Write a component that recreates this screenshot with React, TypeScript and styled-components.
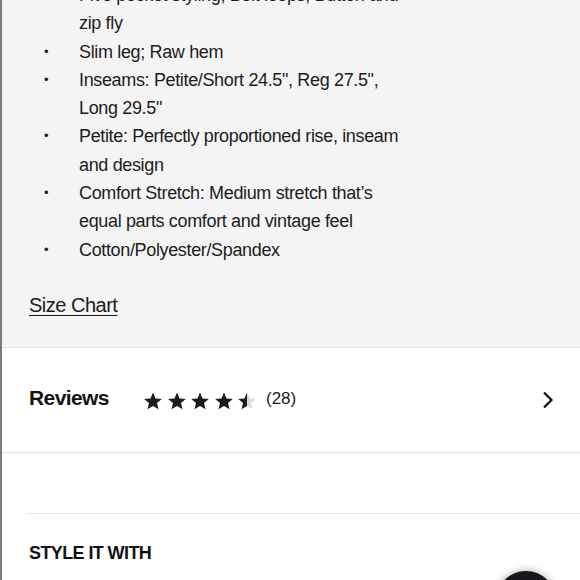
import * as React from 'react'
import styled, { createGlobalStyle } from 'styled-components'

const Global = createGlobalStyle`
  html, body {
    margin: 0;
    padding: 0;
    background: #fff;
  }
  body {
    font-family: 'Liberation Sans', Arial, sans-serif;
    color: #1a1a1a;
  }
`

const Page = styled.div`
  position: relative;
  width: 580px;
  height: 580px;
  overflow: hidden;
  box-sizing: border-box;
  border-left: 2px solid #7b7b7b;
  background: #fff;
`

const Details = styled.section`
  background: #f4f4f4;
  padding: 0 0 28px 27px;
  border-bottom: 1px solid #e3e3e3;
`

const List = styled.ul`
  margin: -19px 0 0;
  padding: 0;
  list-style: none;
  width: 378px;
`

const Item = styled.li`
  display: grid;
  grid-template-columns: 50px 1fr;
  font-size: 18px;
  line-height: 28.3px;
  letter-spacing: -0.35px;
  color: #1c1c1c;
`

const Dot = styled.span`
  padding-left: 15px;
  font-size: 13px;
`

const SizeChart = styled.a`
  display: inline-block;
  margin-top: 27px;
  font-size: 20px;
  line-height: 28px;
  letter-spacing: -0.5px;
  color: #1a1a1a;
  text-decoration: underline;
  text-underline-offset: 3px;
  text-decoration-thickness: 1px;
`

const ReviewsRow = styled.div`
  display: flex;
  align-items: center;
  height: 104px;
  padding: 0 26px 0 27px;
  border-bottom: 1px solid #e3e3e3;
`

const ReviewsTitle = styled.h2`
  margin: -4px 0 0;
  width: 114px;
  font-size: 21px;
  font-weight: 700;
  letter-spacing: -0.6px;
  color: #141414;
`

const Stars = styled.div`
  display: flex;
  gap: 3.5px;
  margin-top: 2px;
`

const Count = styled.span`
  margin: -2px 0 0 9px;
  font-size: 17px;
  color: #1c1c1c;
`

const Chevron = styled.svg`
  margin-left: auto;
  margin-top: 1px;
`

const Spacer = styled.div`
  height: 60px;
`

const Rule = styled.hr`
  margin: 0 0 0 24px;
  border: 0;
  border-top: 1px solid #e6e6e6;
`

const SectionTitle = styled.h3`
  margin: 29px 0 0 27px;
  font-size: 18px;
  font-weight: 700;
  letter-spacing: -0.6px;
  color: #111;
`

const Fab = styled.div`
  position: absolute;
  left: 494px;
  top: 571px;
  width: 60px;
  height: 60px;
  border-radius: 50%;
  background: #17171c;
  box-shadow: 0 0 8px rgba(0, 0, 0, 0.35);
`

const Star = ({ fill, id }: { fill: number; id: string }) => (
  <svg width="20" height="20" viewBox="0 0 24 24">
    <defs>
      <linearGradient id={id}>
        <stop offset={`${fill * 100}%`} stopColor="#1b1b22" />
        <stop offset={`${fill * 100}%`} stopColor="#dcdcdc" />
      </linearGradient>
    </defs>
    <path
      d="M12 1.8l3 7.1 7.6.6-5.8 5 1.8 7.5L12 18 5.4 22l1.8-7.5-5.8-5 7.6-.6z"
      fill={`url(#${id})`}
    />
  </svg>
)

const bullets = [
  'Five pocket styling; Belt loops; Button and zip fly',
  'Slim leg; Raw hem',
  'Inseams: Petite/Short 24.5", Reg 27.5", Long 29.5"',
  'Petite: Perfectly proportioned rise, inseam and design',
  'Comfort Stretch: Medium stretch that\u2019s equal parts comfort and vintage feel',
  'Cotton/Polyester/Spandex',
]

const ratings = [1, 1, 1, 1, 0.5]

const App = () => {
  return (
    <Page>
      <Global />
      <Details>
        <List>
          {bullets.map((b) => (
            <Item key={b}>
              <Dot>•</Dot>
              <span>{b}</span>
            </Item>
          ))}
        </List>
        <SizeChart href="#">Size Chart</SizeChart>
      </Details>
      <ReviewsRow>
        <ReviewsTitle>Reviews</ReviewsTitle>
        <Stars>
          {ratings.map((r, i) => (
            <Star key={i} fill={r} id={`star-${i}`} />
          ))}
        </Stars>
        <Count>(28)</Count>
        <Chevron width="12" height="18" viewBox="0 0 12 18">
          <path d="M2 1.5l7.5 7.5L2 16.5" fill="none" stroke="#111" strokeWidth="2.2" />
        </Chevron>
      </ReviewsRow>
      <Spacer />
      <Rule />
      <SectionTitle>STYLE IT WITH</SectionTitle>
      <Fab />
    </Page>
  )
}

export default App
